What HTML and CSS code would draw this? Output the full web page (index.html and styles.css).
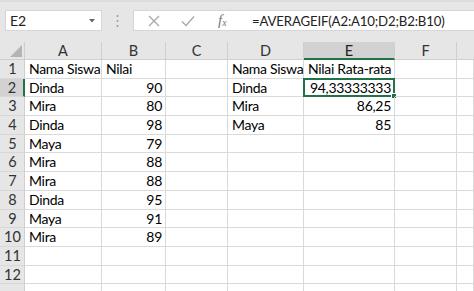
FILE: index.html
```html
<!DOCTYPE html>
<html>
<head>
<meta charset="utf-8">
<link rel="stylesheet" href="styles.css">
</head>
<body>
<div class="app">
  <div class="toolbar">
    <div class="namebox">
      <span class="nb-text">E2</span>
      <svg class="nb-arrow" width="6" height="4" viewBox="0 0 6 4"><path d="M0 0 L6 0 L3 3.5 Z" fill="#666"/></svg>
    </div>
    <div class="sep">
      <svg width="3" height="14" viewBox="0 0 3 14"><circle cx="1.5" cy="2" r="1" fill="#9a9a9a"/><circle cx="1.5" cy="7" r="1" fill="#9a9a9a"/><circle cx="1.5" cy="12" r="1" fill="#9a9a9a"/></svg>
    </div>
    <div class="fbar">
      <div class="fb-icons">
        <svg class="ic" width="14" height="14" viewBox="0 0 14 14"><path d="M2 2 L12 12 M12 2 L2 12" stroke="#a8a8a8" stroke-width="1.3" fill="none"/></svg>
        <svg class="ic" width="16" height="14" viewBox="0 0 16 14"><path d="M2 7.5 L6 11.5 L14 2.5" stroke="#a8a8a8" stroke-width="1.3" fill="none"/></svg>
        <span class="fx">f<sub>x</sub></span>
      </div>
      <div class="formula">=AVERAGEIF(A2:A10;D2;B2:B10)</div>
    </div>
  </div>
  <div class="sheet">
    <div class="corner"><svg width="12" height="12" viewBox="0 0 12 12"><path d="M12 0 L12 12 L0 12 Z" fill="#b4b4b4"/></svg></div>
    <div class="ch">A</div><div class="ch">B</div><div class="ch">C</div><div class="ch">D</div><div class="ch sel">E</div><div class="ch">F</div><div class="ch last"></div>

    <div class="rh">1</div><div class="c">Nama Siswa</div><div class="c">Nilai</div><div class="c"></div><div class="c">Nama Siswa</div><div class="c">Nilai Rata-rata</div><div class="c"></div><div class="c"></div>
    <div class="rh sel">2</div><div class="c">Dinda</div><div class="c n">90</div><div class="c"></div><div class="c">Dinda</div><div class="c n active">94,33333333<span class="handle"></span></div><div class="c"></div><div class="c"></div>
    <div class="rh">3</div><div class="c">Mira</div><div class="c n">80</div><div class="c"></div><div class="c">Mira</div><div class="c n">86,25</div><div class="c"></div><div class="c"></div>
    <div class="rh">4</div><div class="c">Dinda</div><div class="c n">98</div><div class="c"></div><div class="c">Maya</div><div class="c n">85</div><div class="c"></div><div class="c"></div>
    <div class="rh">5</div><div class="c">Maya</div><div class="c n">79</div><div class="c"></div><div class="c"></div><div class="c"></div><div class="c"></div><div class="c"></div>
    <div class="rh">6</div><div class="c">Mira</div><div class="c n">88</div><div class="c"></div><div class="c"></div><div class="c"></div><div class="c"></div><div class="c"></div>
    <div class="rh">7</div><div class="c">Mira</div><div class="c n">88</div><div class="c"></div><div class="c"></div><div class="c"></div><div class="c"></div><div class="c"></div>
    <div class="rh">8</div><div class="c">Dinda</div><div class="c n">95</div><div class="c"></div><div class="c"></div><div class="c"></div><div class="c"></div><div class="c"></div>
    <div class="rh">9</div><div class="c">Maya</div><div class="c n">91</div><div class="c"></div><div class="c"></div><div class="c"></div><div class="c"></div><div class="c"></div>
    <div class="rh">10</div><div class="c">Mira</div><div class="c n">89</div><div class="c"></div><div class="c"></div><div class="c"></div><div class="c"></div><div class="c"></div>
    <div class="rh">11</div><div class="c"></div><div class="c"></div><div class="c"></div><div class="c"></div><div class="c"></div><div class="c"></div><div class="c"></div>
    <div class="rh">12</div><div class="c"></div><div class="c"></div><div class="c"></div><div class="c"></div><div class="c"></div><div class="c"></div><div class="c"></div>
    <div class="rh"></div><div class="c"></div><div class="c"></div><div class="c"></div><div class="c"></div><div class="c"></div><div class="c"></div><div class="c"></div>
  </div>
</div>
</body>
</html>
```
FILE: styles.css
```css
* { box-sizing: border-box; }
html, body { margin: 0; padding: 0; }
body {
  width: 474px;
  height: 291px;
  overflow: hidden;
  background: #fff;
  font-family: Lato, "Open Sans", sans-serif;
  color: #000;
}
.app { width: 474px; height: 291px; overflow: hidden; }

.toolbar {
  height: 42px;
  background: #e6e6e6;
  border-top: 2px solid #dcdcdc;
  padding-top: 8px;
  display: flex;
  align-items: flex-start;
}
.namebox {
  margin-left: 5px;
  width: 97px;
  height: 21px;
  background: #fff;
  border: 1px solid #d6d6d6;
  display: flex;
  align-items: center;
  justify-content: space-between;
  padding: 0 6px 0 4px;
  font-size: 14px;
  color: #222;
}
.nb-arrow { margin-top: 1px; }
.sep {
  width: 31px;
  height: 21px;
  display: flex;
  align-items: center;
  justify-content: center;
}
.fbar {
  flex: 1;
  height: 21px;
  background: #fff;
  border: 1px solid #d6d6d6;
  border-right: none;
  display: flex;
  align-items: center;
}
.fb-icons {
  width: 118px;
  display: flex;
  align-items: center;
  padding-left: 13px;
  gap: 19px;
}
.ic { display: block; }
.fx {
  font-family: "Liberation Serif", serif;
  font-style: italic;
  font-size: 15px;
  color: #777;
  margin-left: 3px;
}
.fx sub { font-size: 10px; vertical-align: -1px; }
.formula {
  font-size: 13.2px;
  letter-spacing: -0.15px;
  color: #222;
  white-space: nowrap;
}

.sheet {
  display: grid;
  grid-template-columns: 25px 77px 64px 62px 76px 91px 62px 1fr;
  grid-template-rows: 18px repeat(13, 18.7px);
  font-size: 14px;
  letter-spacing: -0.3px;
}
.corner {
  background: #e6e6e6;
  border-right: 1px solid #cfcfcf;
  border-bottom: 1px solid #cfcfcf;
  display: flex;
  align-items: flex-end;
  justify-content: flex-end;
  padding: 0 2px 2px 0;
}
.corner svg { display: block; }
.ch {
  background: #e6e6e6;
  border-right: 1px solid #cfcfcf;
  border-bottom: 1px solid #cfcfcf;
  text-align: center;
  font-size: 14.5px;
  letter-spacing: 0;
  line-height: 17px;
  color: #333;
}
.ch.sel {
  background: #d2d2d2;
  border-bottom: 2px solid #217346;
  color: #222;
}
.ch.last { border-right: none; }
.rh {
  background: #e6e6e6;
  border-right: 1px solid #cfcfcf;
  border-bottom: 1px solid #d8d8d8;
  text-align: center;
  font-size: 14.5px;
  letter-spacing: 0;
  line-height: 18px;
  color: #333;
  padding-left: 1px;
}
.rh.sel {
  background: #d2d2d2;
  border-right: 2px solid #217346;
}
.c {
  border-right: 1px solid #dadada;
  border-bottom: 1px solid #dadada;
  padding: 0 3px 0 4px;
  line-height: 18px;
  white-space: nowrap;
  overflow: visible;
  position: relative;
}
.c.n { text-align: right; padding-right: 3px; }
.c.active {
  border: 2px solid #217346;
  margin: -1px 0 0 -1px;
  line-height: 16px;
  padding-right: 2px;
}
.handle {
  position: absolute;
  right: -4px;
  bottom: -4px;
  width: 6px;
  height: 6px;
  background: #217346;
  border: 1px solid #fff;
}
```
